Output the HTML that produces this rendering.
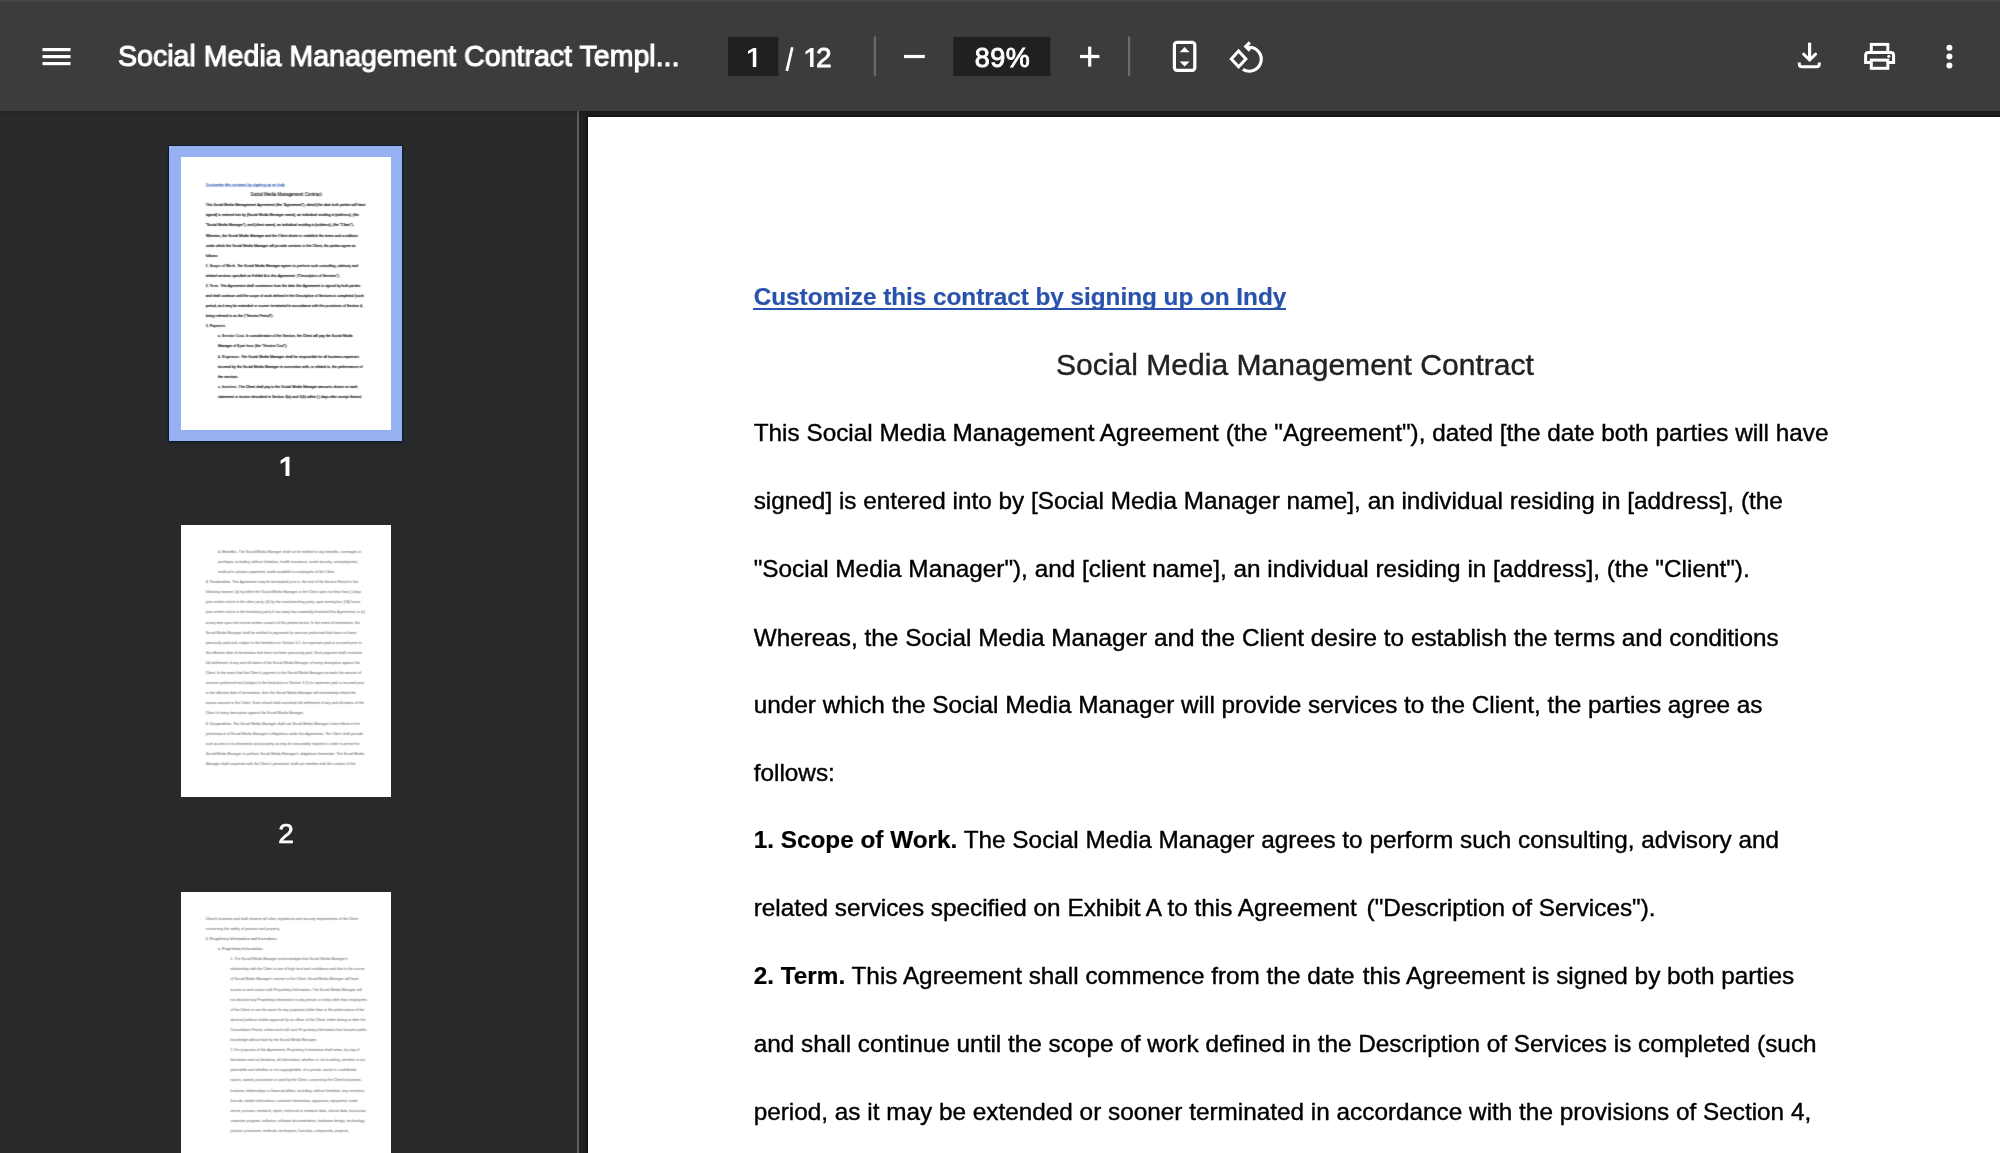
<!DOCTYPE html>
<html>
<head>
<meta charset="utf-8">
<title>Social Media Management Contract Template</title>
<style>
html,body{margin:0;padding:0;}
body{width:2000px;height:1153px;overflow:hidden;background:#202020;font-family:"Liberation Sans",sans-serif;position:relative;}
.abs{position:absolute;}
#toolbar{position:absolute;left:0;top:0;width:2000px;height:111px;background:#3c3c3c;z-index:5;box-shadow:0 0 4px rgba(0,0,0,.35);}
#toolbar .topgrad{position:absolute;left:0;top:0;width:2000px;height:3px;background:linear-gradient(#4a4a4a,#3c3c3c);}
#sidebar{position:absolute;left:0;top:111px;width:577px;height:1042px;background:#28292b;overflow:hidden;}
#divider{position:absolute;left:577px;top:111px;width:2.2px;height:1042px;background:#5e5e5e;}
#content{position:absolute;left:579px;top:111px;width:1421px;height:1042px;background:#202020;overflow:hidden;}
#page{position:absolute;left:9px;top:5.7px;width:1416px;height:1834px;background:#fff;box-shadow:0 0 3px 1px rgba(0,0,0,.7);}
.ptext{position:absolute;left:0;top:0;width:1416px;height:1834px;will-change:transform;}
.t{position:absolute;white-space:nowrap;color:#000;font-size:24.33px;line-height:30px;-webkit-text-stroke:0.4px currentColor;}
.t b{font-weight:bold;-webkit-text-stroke:0.2px currentColor;}
.lnk{color:#2952ad;}
.ul{position:absolute;background:#2952ad;}
.ttl{font-size:30.07px;line-height:36px;color:#222;left:468px;}
.tb-text{position:absolute;color:#fff;white-space:nowrap;will-change:transform;-webkit-text-stroke:0.35px #fff;}
.thumb{position:absolute;background:#fff;overflow:hidden;}
.mini{position:absolute;left:0;top:0;width:1416px;height:1834px;transform-origin:0 0;will-change:transform;}
.sel{position:absolute;background:#95b1f1;box-shadow:0 0 0 1px #0f1a33, 0 1px 2px 1px rgba(0,0,0,.25);}
.mini .t{-webkit-text-stroke:0.9px currentColor;}
.bw{filter:url(#sb);}
.dim .mini .t{color:#7c7c7c;-webkit-text-stroke:0.5px currentColor;}
.bw{position:absolute;left:0;top:0;width:100%;height:100%;}
.tnum{position:absolute;color:#fff;-webkit-text-stroke:0.7px #fff;font-size:28px;line-height:34px;text-align:center;width:60px;will-change:transform;}
</style>
</head>
<body>

<svg width="0" height="0" style="position:absolute"><defs><filter id="sb" x="0" y="0" width="100%" height="100%" color-interpolation-filters="sRGB"><feConvolveMatrix order="3" kernelMatrix="0 1 0 2 5 2 0 1 0" divisor="11" edgeMode="none" preserveAlpha="false"/></filter></defs></svg>
<div id="sidebar">
<div class="sel" style="left:168.9px;top:35.0px;width:233.5px;height:294.8px;"></div>
<div class="thumb sharp" style="left:180.6px;top:46.4px;width:210.6px;height:272.6px;"><div class="bw"><div class="mini" style="top:1.1px;transform:scale(0.14873);"><div class="t lnk" style="top:165.17px;left:165.70px;letter-spacing:-0.03px;"><b>Customize this contract by signing up on Indy</b></div>
<div class="ul" style="left:165.40px;top:191.20px;width:532.6px;height:2px;"></div>
<div class="t ttl" style="top:229.79px">Social Media Management Contract</div>
<div class="t " style="top:300.77px;left:165.70px;">This Social Media Management Agreement (the "Agreement"), dated [the date both parties will have</div>
<div class="t " style="top:368.67px;left:165.70px;">signed] is entered into by [Social Media Manager name], an individual residing in [address], (the</div>
<div class="t " style="top:436.57px;left:165.70px;">"Social Media Manager"), and [client name], an individual residing in [address], (the "Client").</div>
<div class="t " style="top:505.67px;left:165.70px;">Whereas, the Social Media Manager and the Client desire to establish the terms and conditions</div>
<div class="t " style="top:573.47px;left:165.70px;">under which the Social Media Manager will provide services to the Client, the parties agree as</div>
<div class="t " style="top:641.47px;left:165.70px;">follows:</div>
<div class="t " style="top:708.37px;left:165.70px;"><b>1. Scope of Work.</b> The Social Media Manager agrees to perform such consulting, advisory and</div>
<div class="t " style="top:776.07px;left:165.70px;">related services specified on Exhibit A to this Agreement<span style="margin-left:3px"> </span>("Description of Services").</div>
<div class="t " style="top:843.97px;left:165.70px;"><b>2. Term.</b> This Agreement shall commence from the date<span style="margin-left:1.5px"> </span>this Agreement is signed by both parties</div>
<div class="t " style="top:911.87px;left:165.70px;">and shall continue until the scope of work defined in the Description of Services is completed (such</div>
<div class="t " style="top:979.77px;left:165.70px;">period, as it may be extended or sooner terminated in accordance with the provisions of Section 4,</div>
<div class="t " style="top:1047.67px;left:165.70px;">being referred to as the ("Service Period").</div>
<div class="t " style="top:1115.57px;left:165.70px;"><b>3. Payment.</b></div>
<div class="t " style="top:1183.47px;left:248.90px;"><b>a. Service Cost.</b> In consideration of the Service, the Client will pay the Social Media</div>
<div class="t " style="top:1251.37px;left:248.90px;">Manager of $ per hour (the "Service Cost").</div>
<div class="t " style="top:1319.27px;left:248.90px;"><b>b. Expenses.</b> The Social Media Manager shall be responsible for all business expenses</div>
<div class="t " style="top:1387.17px;left:248.90px;">incurred by the Social Media Manager in connection with, or related to, the performance of</div>
<div class="t " style="top:1455.07px;left:248.90px;">the services.</div>
<div class="t " style="top:1522.97px;left:248.90px;"><b>c. Invoices.</b> The Client shall pay to the Social Media Manager amounts shown on each</div>
<div class="t " style="top:1590.87px;left:248.90px;">statement or invoice described in Section 3(a) and 3(b) within [ ] days after receipt thereof.</div></div></div></div>
<svg class="abs" style="left:270px;top:340px" width="30" height="30" viewBox="270 451 30 30"><path d="M289.45 456.7 H286.2 L280.6 460.5 V464 L285.55 460.9 V476 H289.45 Z" fill="#fff"/></svg>
<div class="thumb dim" style="left:180.6px;top:413.7px;width:210.6px;height:272.7px;"><div class="bw"><div class="mini" style="top:0.4px;transform:scale(0.14873);"><div class="t " style="top:164.37px;left:248.90px;"><b>d. Benefits.</b> The Social Media Manager shall not be entitled to any benefits, coverages or</div>
<div class="t " style="top:232.27px;left:248.90px;">privileges, including, without limitation, health insurance, social security, unemployment,</div>
<div class="t " style="top:300.17px;left:248.90px;">medical or pension payments, made available to employees of the Client.</div>
<div class="t " style="top:368.07px;left:165.70px;"><b>4. Termination.</b> This Agreement may be terminated prior to the end of the Service Period in the</div>
<div class="t " style="top:435.97px;left:165.70px;">following manner: (a) by either the Social Media Manager or the Client upon not less than [ ] days</div>
<div class="t " style="top:503.87px;left:165.70px;">prior written notice to the other party; (b) by the non-breaching party, upon twenty-four (24) hours</div>
<div class="t " style="top:571.77px;left:165.70px;">prior written notice to the breaching party if one party has materially breached this Agreement; or (c)</div>
<div class="t " style="top:639.67px;left:165.70px;">at any time upon the mutual written consent of the parties hereto. In the event of termination, the</div>
<div class="t " style="top:707.57px;left:165.70px;">Social Media Manager shall be entitled to payments for services performed that have not been</div>
<div class="t " style="top:775.47px;left:165.70px;">previously paid and, subject to the limitations in Section 3.2, for expenses paid or incurred prior to</div>
<div class="t " style="top:843.37px;left:165.70px;">the effective date of termination that have not been previously paid. Such payment shall constitute</div>
<div class="t " style="top:911.27px;left:165.70px;">full settlement of any and all claims of the Social Media Manager of every description against the</div>
<div class="t " style="top:979.17px;left:165.70px;">Client. In the event that the Client's payment to the Social Media Manager exceeds the amount of</div>
<div class="t " style="top:1047.07px;left:165.70px;">services performed and (subject to the limitations in Section 3.2) for expenses paid or incurred prior</div>
<div class="t " style="top:1114.97px;left:165.70px;">to the effective date of termination, then the Social Media Manager will immediately refund the</div>
<div class="t " style="top:1182.87px;left:165.70px;">excess amount to the Client. Such refund shall constitute full settlement of any and all claims of the</div>
<div class="t " style="top:1250.77px;left:165.70px;">Client of every description against the Social Media Manager.</div>
<div class="t " style="top:1318.67px;left:165.70px;"><b>5. Cooperation.</b> The Social Media Manager shall use Social Media Manager's best efforts in the</div>
<div class="t " style="top:1386.57px;left:165.70px;">performance of Social Media Manager's obligations under this Agreement. The Client shall provide</div>
<div class="t " style="top:1454.47px;left:165.70px;">such access to its information and property as may be reasonably required in order to permit the</div>
<div class="t " style="top:1522.37px;left:165.70px;">Social Media Manager to perform Social Media Manager's obligations hereunder. The Social Media</div>
<div class="t " style="top:1590.27px;left:165.70px;">Manager shall cooperate with the Client's personnel, shall not interfere with the conduct of the</div></div></div></div>
<div class="tnum" style="left:255.5px;top:706.2px;">2</div>
<div class="thumb dim" style="left:180.6px;top:780.7px;width:210.6px;height:272.7px;"><div class="bw"><div class="mini" style="top:0.4px;transform:scale(0.14873);"><div class="t " style="top:164.37px;left:165.70px;">Client's business and shall observe all rules, regulations and security requirements of the Client</div>
<div class="t " style="top:232.27px;left:165.70px;">concerning the safety of persons and property.</div>
<div class="t " style="top:300.17px;left:165.70px;"><b>6. Proprietary Information and Inventions.</b></div>
<div class="t " style="top:368.07px;left:248.90px;"><b>a. Proprietary Information.</b></div>
<div class="t " style="top:435.97px;left:332.10px;">1. The Social Media Manager acknowledges that Social Media Manager's</div>
<div class="t " style="top:503.87px;left:332.10px;">relationship with the Client is one of high trust and confidence and that in the course</div>
<div class="t " style="top:571.77px;left:332.10px;">of Social Media Manager's service to the Client, Social Media Manager will have</div>
<div class="t " style="top:639.67px;left:332.10px;">access to and contact with Proprietary Information. The Social Media Manager will</div>
<div class="t " style="top:707.57px;left:332.10px;">not disclose any Proprietary Information to any person or entity other than employees</div>
<div class="t " style="top:775.47px;left:332.10px;">of the Client or use the same for any purposes (other than in the performance of the</div>
<div class="t " style="top:843.37px;left:332.10px;">services) without written approval by an officer of the Client, either during or after the</div>
<div class="t " style="top:911.27px;left:332.10px;">Consultation Period, unless and until such Proprietary Information has become public</div>
<div class="t " style="top:979.17px;left:332.10px;">knowledge without fault by the Social Media Manager.</div>
<div class="t " style="top:1047.07px;left:332.10px;">2. For purposes of this Agreement, Proprietary Information shall mean, by way of</div>
<div class="t " style="top:1114.97px;left:332.10px;">illustration and not limitation, all information, whether or not in writing, whether or not</div>
<div class="t " style="top:1182.87px;left:332.10px;">patentable and whether or not copyrightable, of a private, secret or confidential</div>
<div class="t " style="top:1250.77px;left:332.10px;">nature, owned, possessed or used by the Client, concerning the Client's business,</div>
<div class="t " style="top:1318.67px;left:332.10px;">business relationships or financial affairs, including, without limitation, any invention,</div>
<div class="t " style="top:1386.57px;left:332.10px;">formula, vendor information, customer information, apparatus, equipment, trade</div>
<div class="t " style="top:1454.47px;left:332.10px;">secret, process, research, report, technical or research data, clinical data, know-how,</div>
<div class="t " style="top:1522.37px;left:332.10px;">computer program, software, software documentation, hardware design, technology,</div>
<div class="t " style="top:1590.27px;left:332.10px;">product, processes, methods, techniques, formulas, compounds, projects,</div></div></div></div>
</div>
<div id="divider"></div>
<div id="content">
  <div id="page">
<div class="ptext">
<div class="t lnk" style="top:165.17px;left:165.70px;letter-spacing:-0.03px;"><b>Customize this contract by signing up on Indy</b></div>
<div class="ul" style="left:165.40px;top:191.20px;width:532.6px;height:2px;"></div>
<div class="t ttl" style="top:229.79px">Social Media Management Contract</div>
<div class="t " style="top:300.77px;left:165.70px;">This Social Media Management Agreement (the "Agreement"), dated [the date both parties will have</div>
<div class="t " style="top:368.67px;left:165.70px;">signed] is entered into by [Social Media Manager name], an individual residing in [address], (the</div>
<div class="t " style="top:436.57px;left:165.70px;">"Social Media Manager"), and [client name], an individual residing in [address], (the "Client").</div>
<div class="t " style="top:505.67px;left:165.70px;">Whereas, the Social Media Manager and the Client desire to establish the terms and conditions</div>
<div class="t " style="top:573.47px;left:165.70px;">under which the Social Media Manager will provide services to the Client, the parties agree as</div>
<div class="t " style="top:641.47px;left:165.70px;">follows:</div>
<div class="t " style="top:708.37px;left:165.70px;"><b>1. Scope of Work.</b> The Social Media Manager agrees to perform such consulting, advisory and</div>
<div class="t " style="top:776.07px;left:165.70px;">related services specified on Exhibit A to this Agreement<span style="margin-left:3px"> </span>("Description of Services").</div>
<div class="t " style="top:843.97px;left:165.70px;"><b>2. Term.</b> This Agreement shall commence from the date<span style="margin-left:1.5px"> </span>this Agreement is signed by both parties</div>
<div class="t " style="top:911.87px;left:165.70px;">and shall continue until the scope of work defined in the Description of Services is completed (such</div>
<div class="t " style="top:979.77px;left:165.70px;">period, as it may be extended or sooner terminated in accordance with the provisions of Section 4,</div>
<div class="t " style="top:1047.67px;left:165.70px;">being referred to as the ("Service Period").</div>
<div class="t " style="top:1115.57px;left:165.70px;"><b>3. Payment.</b></div>
<div class="t " style="top:1183.47px;left:248.90px;"><b>a. Service Cost.</b> In consideration of the Service, the Client will pay the Social Media</div>
<div class="t " style="top:1251.37px;left:248.90px;">Manager of $ per hour (the "Service Cost").</div>
<div class="t " style="top:1319.27px;left:248.90px;"><b>b. Expenses.</b> The Social Media Manager shall be responsible for all business expenses</div>
<div class="t " style="top:1387.17px;left:248.90px;">incurred by the Social Media Manager in connection with, or related to, the performance of</div>
<div class="t " style="top:1455.07px;left:248.90px;">the services.</div>
<div class="t " style="top:1522.97px;left:248.90px;"><b>c. Invoices.</b> The Client shall pay to the Social Media Manager amounts shown on each</div>
<div class="t " style="top:1590.87px;left:248.90px;">statement or invoice described in Section 3(a) and 3(b) within [ ] days after receipt thereof.</div>
</div>
  </div>
</div>
<div id="toolbar"><div class="topgrad"></div>
<svg class="abs" style="left:0;top:0" width="2000" height="111" viewBox="0 0 2000 111" fill="none" stroke="none">
  <!-- hamburger -->
  <rect x="42.5" y="48" width="28" height="3.2" fill="#fff"/>
  <rect x="42.5" y="55" width="28" height="3.2" fill="#fff"/>
  <rect x="42.5" y="62" width="28" height="3.2" fill="#fff"/>
  <!-- page box / zoom box -->
  <rect x="728" y="37" width="50.4" height="39" fill="#202020"/>
  <rect x="953.3" y="37" width="97.1" height="39" fill="#202020"/>
  <!-- separators -->
  <rect x="873.8" y="36.5" width="2.2" height="39.7" fill="#6b6b6b"/>
  <rect x="1128" y="36.5" width="2.2" height="39.7" fill="#6b6b6b"/>
  <!-- minus / plus -->
  <rect x="904" y="54.9" width="20.8" height="3.2" fill="#fff"/>
  <rect x="1080" y="54.9" width="19.4" height="3.2" fill="#fff"/>
  <rect x="1088.1" y="46.6" width="3.2" height="20" fill="#fff"/>
  <!-- fit to page -->
  <rect x="1174.4" y="42.4" width="20.4" height="28" rx="2.6" stroke="#fff" stroke-width="3.2"/>
  <path d="M1179.6 52.2 L1184.6 47 L1189.6 52.2 Z" fill="#fff"/>
  <path d="M1179.6 61.4 L1184.6 66.6 L1189.6 61.4 Z" fill="#fff"/>
  <!-- rotate ccw -->
  <path d="M1238.6 51 L1245.9 58.9 L1238.6 66.8 L1231.3 58.9 Z" stroke="#fff" stroke-width="3" stroke-linejoin="miter"/>
  <path d="M1246.5 47.2 L1249.2 47.2 A12 12 0 1 1 1242.9 69.4" stroke="#fff" stroke-width="3.1"/>
  <path d="M1249.9 42.3 L1245.7 46.5 L1249.9 50.7" stroke="#fff" stroke-width="3.1" stroke-linecap="butt" stroke-linejoin="miter"/>
  <!-- download -->
  <path d="M1809.6 42.7 V59.5" stroke="#fff" stroke-width="3.2"/>
  <path d="M1803.6 54.1 L1809.6 60 L1815.6 54.1" stroke="#fff" stroke-width="2.9" stroke-linecap="round"/>
  <path d="M1799.3 62.6 V64 Q1799.3 66.8 1802.1 66.8 H1816.5 Q1819.3 66.8 1819.3 64 V62.6" stroke="#fff" stroke-width="3"/>
  <!-- print -->
  <rect x="1871.3" y="44.4" width="16.5" height="8" stroke="#fff" stroke-width="3"/>
  <path d="M1870 62.6 H1865.6 V55.4 Q1865.6 52.5 1868.5 52.5 H1890.7 Q1893.6 52.5 1893.6 55.4 V62.6 H1889" stroke="#fff" stroke-width="3"/>
  <rect x="1871.3" y="60.1" width="16.5" height="8.2" stroke="#fff" stroke-width="3"/>
  <circle cx="1888.8" cy="56.2" r="1.5" fill="#fff"/>
  <!-- more -->
  <circle cx="1949.4" cy="47.8" r="3" fill="#fff"/>
  <circle cx="1949.4" cy="56.6" r="3" fill="#fff"/>
  <circle cx="1949.4" cy="65.4" r="3" fill="#fff"/>
  <!-- digits 1, slash -->
  <path d="M756.3 47.9 H753.4 L748 50.9 V53.9 L752.8 51.2 V66.9 H756.3 Z" fill="#fff"/>
  <path d="M813.55 47.9 H810.65 L805.5 51.4 V54.4 L810.05 51.7 V66.9 H813.55 Z" fill="#fff"/>
  <path d="M792.3 47.2 L786.8 71" stroke="#fff" stroke-width="2.7"/>
</svg>
<div class="tb-text" id="ttl" style="left:118px;top:38.4px;font-size:30px;line-height:36px;transform-origin:0 50%;transform:scaleX(0.952);-webkit-text-stroke:1.1px #fff;">Social Media Management Contract Templ...</div>
<div class="tb-text" id="pgt" style="left:816.2px;top:39.7px;font-size:27px;line-height:36px;-webkit-text-stroke:0.8px #fff;transform-origin:0 50%;transform:scaleX(1.04);">2</div>
<div class="tb-text" id="zm" style="left:953.8px;top:39.7px;width:97.1px;text-align:center;font-size:27px;line-height:36px;-webkit-text-stroke:0.9px #fff;letter-spacing:0.6px;">89%</div>
</div>

</body>
</html>
